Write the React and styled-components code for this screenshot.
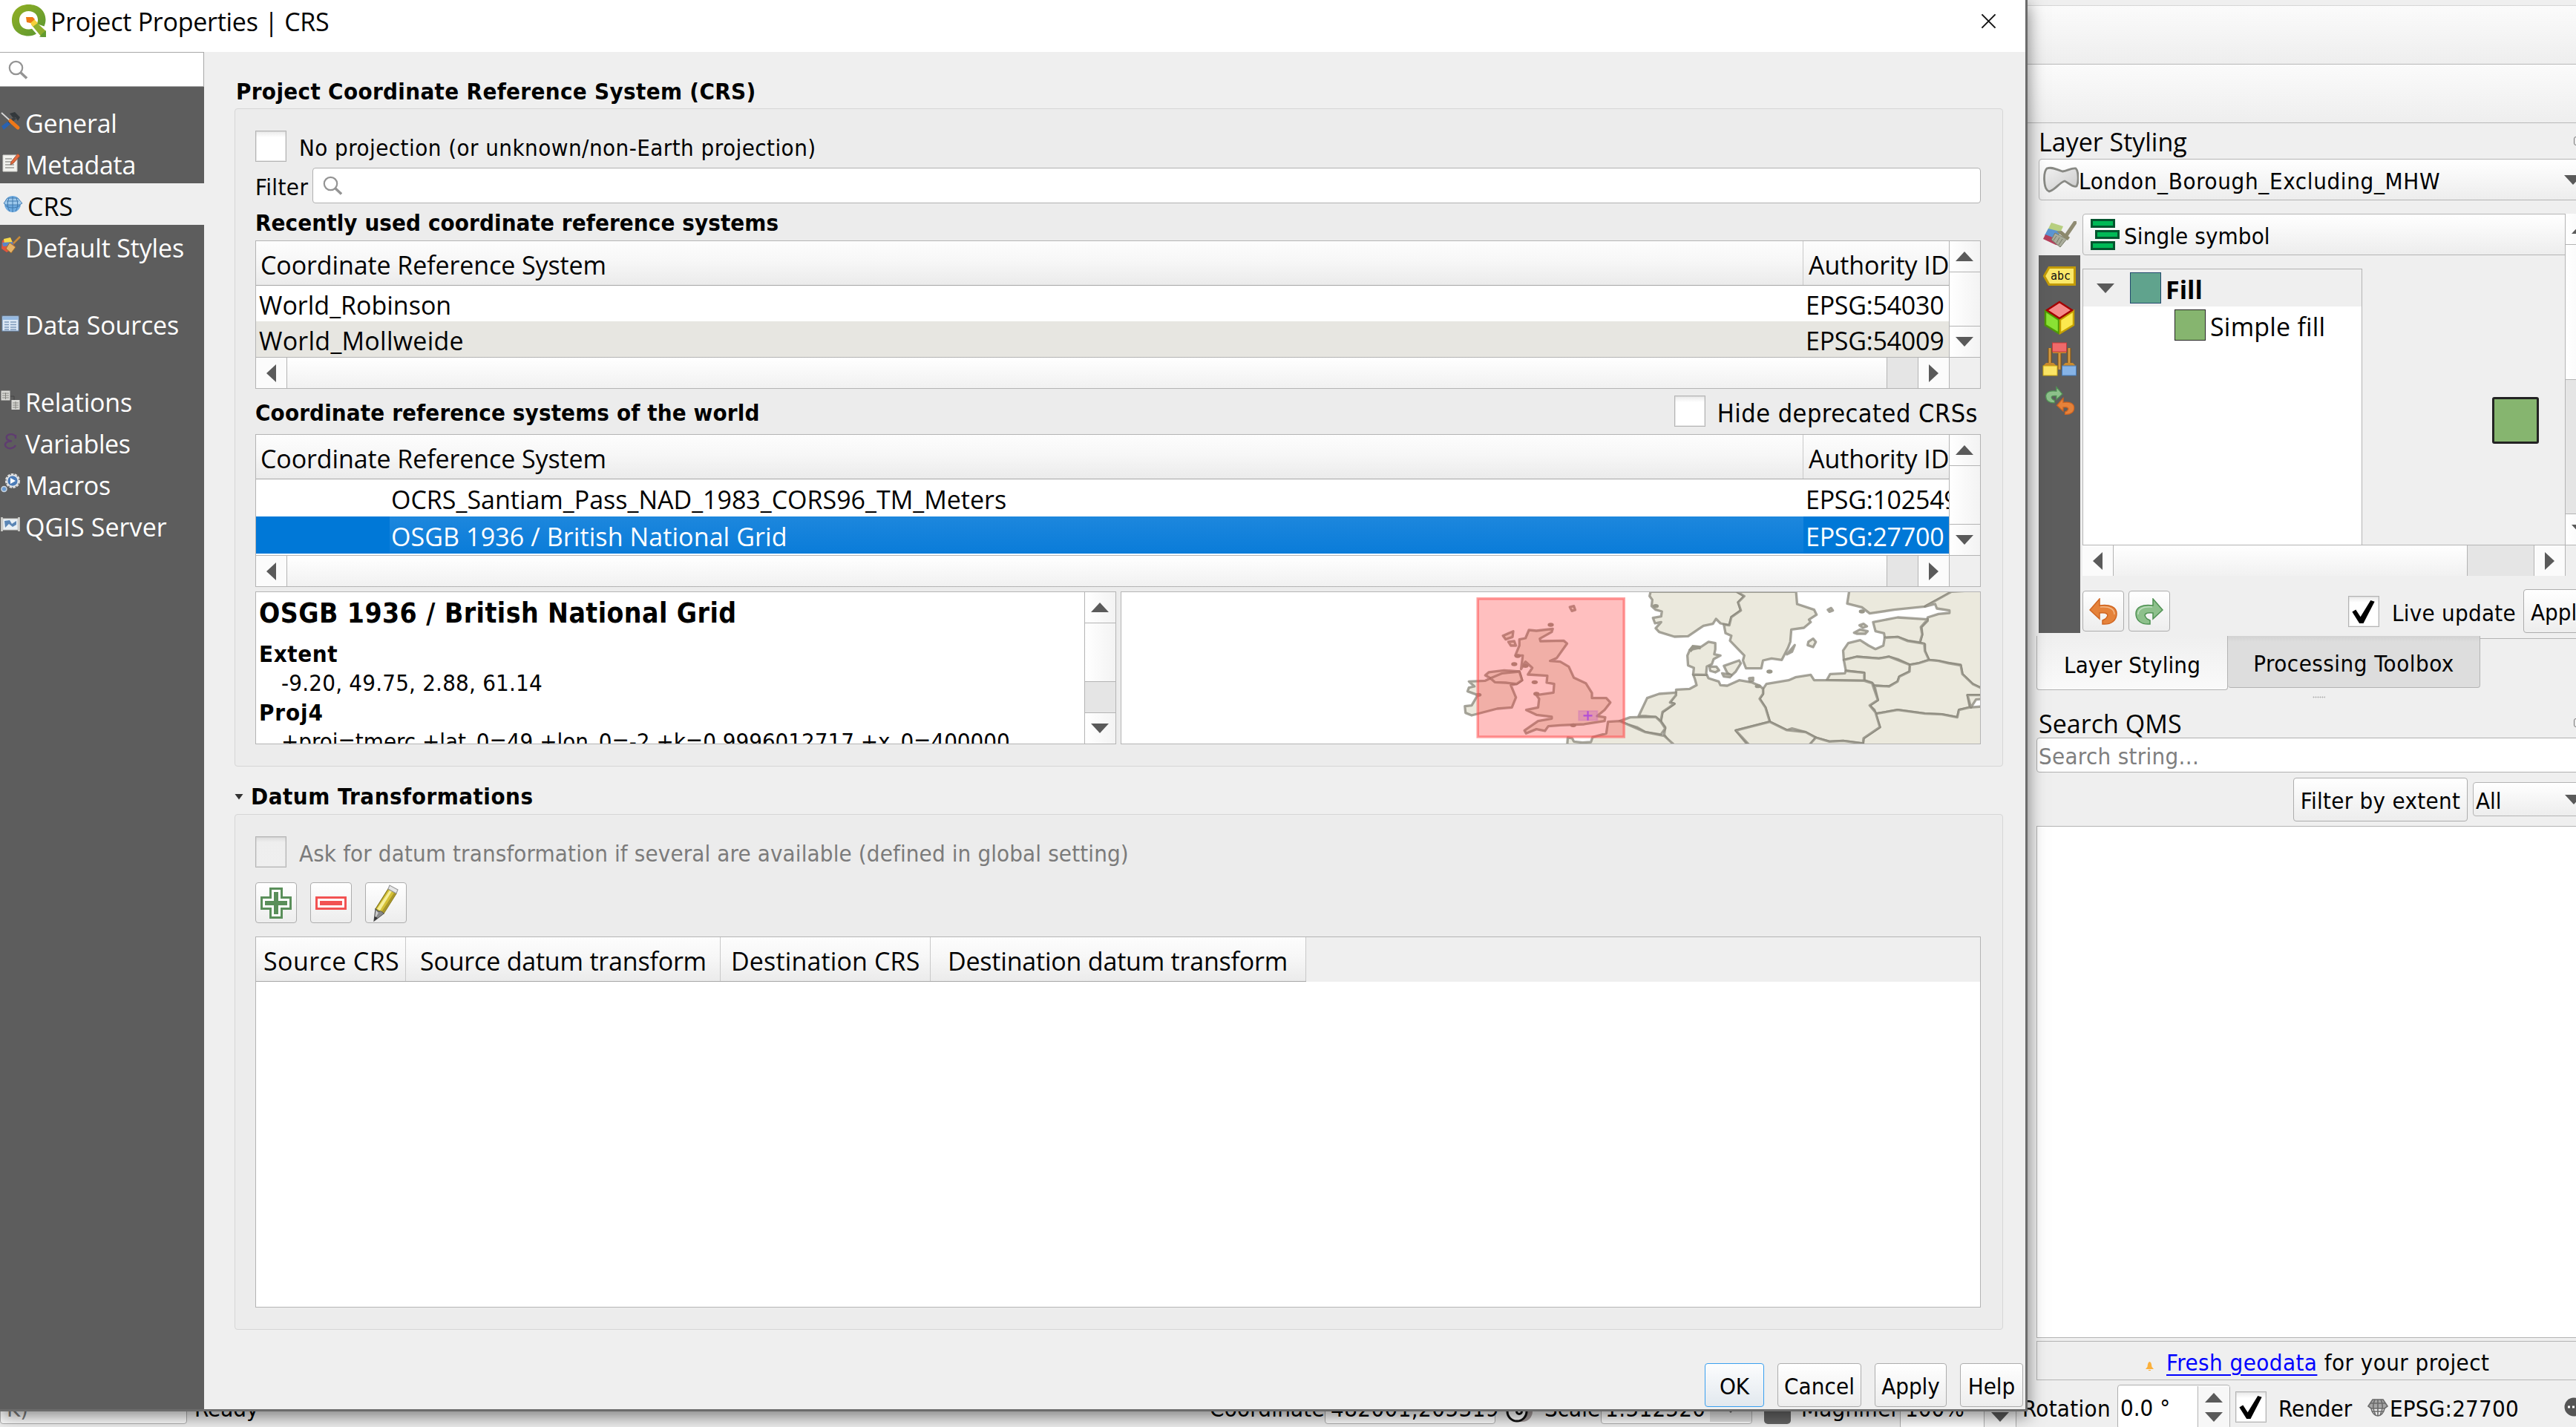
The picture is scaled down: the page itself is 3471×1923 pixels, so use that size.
import React from "react";
import styled, { createGlobalStyle, css } from "styled-components";

const GlobalStyle = createGlobalStyle`
  * { box-sizing: border-box; }
  body { margin: 0; background: #efefef; overflow: hidden; }
`;

const listFont = `"Open Sans", "Noto Sans", sans-serif`;
const formFont = `"DejaVu Sans Condensed", "DejaVu Sans", sans-serif`;
const line = "#b4b4b4";
const dark = "#5d5d5d";
const raised = "linear-gradient(#ffffff, #ededed)";

/* ---------- text ---------- */

const ListText = styled.span`
  display: block;
  font-family: ${listFont};
  font-size: 34px;
  font-weight: ${(p) => (p.$bold ? 700 : 400)};
  letter-spacing: ${(p) => p.$track || 0}px;
  padding-top: ${(p) => (p.$drop || 0) + 2}px;
  color: ${(p) => p.$color || "#000"};
  line-height: 1.2;
  white-space: pre;
`;

const FormText = styled.span`
  display: block;
  flex: none;
  font-family: ${formFont};
  font-size: ${(p) => p.$size || 31}px;
  font-weight: ${(p) => (p.$bold ? 700 : 400)};
  letter-spacing: ${(p) => p.$track || 0}px;
  padding-top: ${(p) => (p.$drop || 0) + 2}px;
  width: ${(p) => (p.$width ? `${p.$width}px` : "auto")};
  color: ${(p) => p.$color || "#000"};
  line-height: 1.2;
  white-space: pre;
`;

/* ---------- shared controls ---------- */

const triangle = {
  up: css`border-width: 0 12px 13px 12px; border-bottom-color: #5a5a5a;`,
  down: css`border-width: 13px 12px 0 12px; border-top-color: #5a5a5a;`,
  left: css`border-width: 12px 13px 12px 0; border-right-color: #5a5a5a;`,
  right: css`border-width: 12px 0 12px 13px; border-left-color: #5a5a5a;`,
};

const Arrow = styled.i`
  display: block;
  flex: none;
  width: 0;
  height: 0;
  border: 0 solid transparent;
  ${(p) => triangle[p.$dir]}
`;

const CheckBox = styled.span`
  flex: none;
  width: 42px;
  height: 42px;
  border: 1px solid ${line};
  outline: 1px solid rgba(180, 180, 180, 0.3);
  outline-offset: -2px;
  background: ${(p) =>
    p.$disabled
      ? "linear-gradient(#dcdcdc, #eeeeee 7px, #efefef)"
      : "linear-gradient(#e9e9e9, #ffffff 8px)"};
`;

const Button = styled.button`
  display: flex;
  flex: none;
  align-items: center;
  justify-content: ${(p) => (p.$start ? "flex-start" : "center")};
  width: ${(p) => p.$w}px;
  height: ${(p) => p.$h}px;
  padding: 0 0 0 ${(p) => (p.$start ? 9 : 0)}px;
  border: 1.5px solid ${(p) => (p.$primary ? "#3aa0f0" : "#adadad")};
  border-radius: 4px;
  background: ${(p) =>
    p.$primary ? "linear-gradient(#fcfdfe, #e2e8ee)" : raised};
`;

const Combo = styled.div`
  display: flex;
  align-items: center;
  flex: none;
  width: ${(p) => p.$w}px;
  height: ${(p) => p.$h}px;
  margin-left: ${(p) => p.$ml || 0}px;
  padding-left: ${(p) => p.$pad}px;
  border: 1.5px solid ${line};
  border-radius: 4px;
  background: ${raised};
`;

const Push = styled.span`
  margin-left: auto;
  padding-right: ${(p) => p.$pr || 0}px;
`;

const Field = styled.div`
  display: flex;
  align-items: center;
  flex: none;
  width: ${(p) => (p.$w ? `${p.$w}px` : "auto")};
  flex-grow: ${(p) => (p.$w ? 0 : 1)};
  height: ${(p) => p.$h}px;
  margin-left: ${(p) => p.$ml || 0}px;
  padding-left: ${(p) => p.$pad || 0}px;
  border: 1.5px solid #b0b0b0;
  border-radius: 4px;
  background: #fff;
`;

/* ---------- scroll bars ---------- */

const VBar = styled.div`
  display: flex;
  flex-direction: column;
  width: ${(p) => p.$w || 42}px;
  flex: none;
  border-left: 1px solid ${line};
  background: linear-gradient(90deg, #ffffff, #f3f3f3);
`;

const VEnd = styled.div`
  display: flex;
  align-items: center;
  justify-content: center;
  flex: none;
  height: 42px;
  padding-right: 2px;
  background: linear-gradient(90deg, #ffffff, #f3f3f3);
  border-top: ${(p) => (p.$last ? `1px solid ${line}` : "none")};
  border-bottom: ${(p) => (p.$last ? "none" : `1px solid ${line}`)};
`;

const Track = styled.div`
  flex: ${(p) => (p.$len ? `0 0 ${p.$len}px` : "1")};
`;

const VThumb = styled.div`
  flex: ${(p) => (p.$len ? `0 0 ${p.$len}px` : "1")};
  border-top: 1px solid ${line};
  background: #e5e5e5;
`;

const HBar = styled.div`
  display: flex;
  flex: none;
  height: 42px;
  border-top: 1px solid ${line};
  background: linear-gradient(#ffffff, #f1f1f1);
`;

const HEnd = styled.div`
  display: flex;
  align-items: center;
  justify-content: center;
  flex: none;
  width: 42px;
  background: #fbfbfb;
  border-right: 1px solid ${line};
`;

const HThumb = styled.div`
  flex: none;
  width: ${(p) => p.$len}px;
  border-left: 1px solid ${line};
  border-right: 1px solid ${line};
  background: #e5e5e5;
`;

const Corner = styled.div`
  flex: none;
  width: 41px;
  background: #efefef;
`;

/* ---------- dialog ---------- */

const Screen = styled.div`
  position: relative;
  width: 3471px;
  height: 1923px;
  overflow: hidden;
  background: #efefef;
`;

const Dialog = styled.section`
  position: absolute;
  left: 0;
  top: 0;
  display: flex;
  flex-direction: column;
  width: 2732px;
  height: 1902px;
  border-right: 3px solid #6b6b6b;
  border-bottom: 3px solid #6b6b6b;
  background: #efefef;
  box-shadow: 0 6px 22px rgba(0, 0, 0, 0.5);
`;

const TitleBar = styled.header`
  display: flex;
  align-items: center;
  flex: none;
  height: 70px;
  padding: 0 39px 14px 14px;
  background: #fff;
`;

const TitleText = styled.div`
  flex: 1;
  padding: 1px 0 0 4px;
`;

const DialogBody = styled.div`
  display: flex;
  flex: 1;
  min-height: 0;
`;

const Sidebar = styled.nav`
  flex: none;
  width: 275px;
  background: ${dark};
`;

const SideSearch = styled.div`
  display: flex;
  align-items: center;
  height: 47px;
  margin-bottom: 18px;
  padding-left: 11px;
  border: 1px solid #a8a8a8;
  border-left: 0;
  background: #fff;
`;

const SideItem = styled.div`
  display: flex;
  align-items: center;
  height: 56px;
  margin-top: ${(p) => (p.$gap ? 48 : 0)}px;
  padding-left: ${(p) => (p.$active ? 4 : 1)}px;
  background: ${(p) => (p.$active ? "#efefef" : "transparent")};
  svg { flex: none; margin-right: 6px; }
`;

const Main = styled.main`
  display: flex;
  flex-direction: column;
  flex: 1;
  min-width: 0;
  padding-left: 41px;
`;

const Heading = styled.div`
  display: flex;
  align-items: center;
  flex: none;
  height: ${(p) => p.$h}px;
  padding-left: ${(p) => p.$pad || 0}px;
  gap: 10px;
`;

const FoldArrow = styled.svg`
  margin-top: 17px;
`;

const Group = styled.div`
  display: flex;
  flex-direction: column;
  flex: none;
  width: 2383px;
  height: ${(p) => p.$h}px;
  padding: 29px 29px 0 27px;
  border: 1px solid #d6d6d6;
  border-radius: 4px;
  background: #ececec;
`;

const Row = styled.div`
  display: flex;
  align-items: center;
  flex: none;
  height: ${(p) => p.$h}px;
  margin-top: ${(p) => p.$mt || 0}px;
  gap: ${(p) => p.$gap || 0}px;
`;

const Spread = styled(Row)`
  justify-content: space-between;
`;

const HideOption = styled.div`
  display: flex;
  align-items: center;
  gap: 16px;
  padding-right: 4px;
`;

const Frame = styled.div`
  display: flex;
  flex: none;
  flex-direction: ${(p) => (p.$row ? "row" : "column")};
  width: ${(p) => (p.$w ? `${p.$w}px` : "auto")};
  height: ${(p) => p.$h}px;
  margin-top: ${(p) => p.$mt || 0}px;
  overflow: hidden;
  border: 1px solid ${line};
  background: #fff;
`;

const TableTop = styled.div`
  display: flex;
  flex: 1;
  min-height: 0;
`;

const TableCells = styled.div`
  flex: 1;
  min-width: 0;
  overflow: hidden;
`;

const HeadRow = styled.div`
  display: flex;
  height: 60px;
  border-bottom: 1.5px solid #a6a6a6;
  background: linear-gradient(#fdfdfd 0%, #f7f7f7 45%, #ebebeb 100%);
`;

const HeadCell = styled.div`
  display: flex;
  align-items: center;
  flex: none;
  width: ${(p) => p.$w}px;
  padding-left: ${(p) => p.$pad}px;
  border-right: ${(p) => (p.$last ? "none" : "1px solid #c9c9c9")};
`;

const CrsRow = styled.div`
  display: flex;
  height: ${(p) => p.$h}px;
  background: ${(p) =>
    p.$selected ? "#0078d7" : p.$alt ? "#e7e6e1" : "#fff"};
`;

const NameCell = styled.div`
  display: flex;
  align-items: center;
  flex: none;
  width: ${(p) => 2085 - (p.$indent || 0)}px;
  margin-left: ${(p) => p.$indent || 0}px;
  padding-left: ${(p) => (p.$indent ? 2 : 4)}px;
  background: ${(p) =>
    p.$selected ? "linear-gradient(#1d87dd, #0a7cd9)" : "transparent"};
`;

const IdCell = styled.div`
  display: flex;
  align-items: center;
  padding-left: 3px;
`;

const InfoText = styled.div`
  flex: 1;
  min-width: 0;
  overflow: hidden;
  padding-left: 4px;
`;

const InfoTitle = styled.div`
  display: flex;
  align-items: center;
  height: 56px;
  margin-bottom: 7px;
`;

const InfoLine = styled.div`
  display: flex;
  align-items: center;
  height: 39.3px;
  padding-left: ${(p) => (p.$indent ? 30 : 0)}px;
`;

const Map = styled.div`
  flex: none;
  width: 1159px;
  height: 206px;
  border: 1px solid ${line};
  background: #fff;
  svg { display: block; }
`;

const DatumHead = styled.div`
  display: flex;
  height: 60px;
  background: #efefef;
`;

const DatumCells = styled.div`
  display: flex;
  width: 1415px;
  border-bottom: 1.5px solid #a6a6a6;
  background: linear-gradient(#fdfdfd 0%, #f7f7f7 45%, #ebebeb 100%);
`;

const ButtonBar = styled.footer`
  display: flex;
  justify-content: flex-end;
  gap: 18px;
  margin-top: 45px;
  padding-right: 3px;
`;

/* ---------- main window behind ---------- */

const AppWindow = styled.div`
  display: flex;
  flex-direction: column;
  height: 1923px;
`;

const ToolStrip = styled.div`
  flex: none;
  height: ${(p) => p.$h}px;
  border-bottom: 1.5px solid ${(p) => (p.$faint ? "#d6d6d6" : "#b8b8b8")};
  background: ${(p) => (p.$faint ? "#efefef" : "linear-gradient(#fbfbfb, #eeeeee)")};
`;

const Dock = styled.aside`
  display: flex;
  flex-direction: column;
  flex: none;
  width: 739px;
  height: 1695px;
  margin-left: 2732px;
  overflow: hidden;
`;

const DockTitle = styled.div`
  display: flex;
  align-items: center;
  justify-content: space-between;
  flex: none;
  height: ${(p) => p.$h}px;
  padding-left: 15px;
`;

const FloatMark = styled.i`
  width: 12px;
  height: 12px;
  margin-right: -9px;
  border: 1.5px solid #777;
  border-radius: 3px;
`;

const Styling = styled.div`
  display: flex;
  flex: none;
  height: 565px;
  margin: 18px 0 0 15px;
`;

const StyleTabs = styled.div`
  display: flex;
  flex-direction: column;
  align-items: center;
  flex: none;
  width: 56px;
  margin-right: 3px;
  background: linear-gradient(#efefef 56px, ${dark} 56px);
  svg { flex: none; display: block; }
`;

const TabSlot = styled.div`
  display: flex;
  align-items: center;
  justify-content: center;
  height: ${(p) => p.$h}px;
`;

const StylePane = styled.div`
  display: flex;
  flex-direction: column;
  flex: none;
  width: 700px;
`;

const PaneTop = styled.div`
  display: flex;
  height: 446px;
`;

const PaneInner = styled.div`
  width: 650px;
  flex: none;
`;

const TreeRow = styled.div`
  display: flex;
  height: 372px;
  margin-top: 18px;
`;

const Tree = styled.div`
  width: 377px;
  border: 1px solid ${line};
  border-bottom: 0;
  background: #fff;
`;

const TreeItem = styled.div`
  display: flex;
  align-items: center;
  height: 50px;
  padding-left: ${(p) => p.$pad}px;
  background: ${(p) => (p.$active ? "#efefef" : "#fff")};
`;

const Swatch = styled.span`
  flex: none;
  width: 42px;
  height: 42px;
  margin: 0 6px 0 ${(p) => p.$ml || 0}px;
  border: 1.5px solid ${(p) => p.$edge};
  background: ${(p) => p.$fill};
`;

const Preview = styled.div`
  width: 63px;
  height: 63px;
  margin: 173px 0 0 175px;
  border: 3px solid #232323;
  border-radius: 3px;
  background: #86b56f;
`;

const StyleFoot = styled.div`
  display: flex;
  align-items: center;
  height: 59px;
  margin-top: 18px;
`;

const LiveUpdate = styled.div`
  display: flex;
  align-items: center;
  gap: 17px;
  width: 236px;
  margin-left: 240px;
`;

const Tabs = styled.div`
  display: flex;
  flex: none;
  height: 73px;
  margin: 4px 0 0 12px;
`;

const Tab = styled.div`
  display: flex;
  align-items: center;
  justify-content: center;
  width: ${(p) => p.$w}px;
  height: ${(p) => (p.$active ? 73 : 70)}px;
  border: 1.5px solid ${line};
  border-top: 0;
  border-left-width: ${(p) => (p.$active ? 1.5 : 0)}px;
  border-radius: 0 0 4px 4px;
  background: ${(p) =>
    p.$active ? "linear-gradient(#efefef, #fafafa)" : "linear-gradient(#d2d2d2, #dddddd 8px)"};
`;

const TabLine = styled.div`
  flex: 1;
  margin-top: 3px;
  border-top: 1.5px solid ${line};
`;

const Grip = styled.div`
  flex: none;
  width: 17px;
  height: 24px;
  margin-left: 384px;
  background: radial-gradient(circle, #b0b0b0 0.8px, transparent 1.2px) 0 8px / 3px 3px repeat-x;
`;

const SearchTools = styled.div`
  display: flex;
  align-items: center;
  flex: none;
  height: 72px;
  padding-left: 358px;
`;

const Results = styled.div`
  flex: none;
  width: 760px;
  height: 690px;
  margin-left: 12px;
  border: 1px solid ${line};
  background: #fff;
`;

const News = styled.div`
  display: flex;
  align-items: center;
  flex: none;
  width: 760px;
  height: 53px;
  margin: 4px 0 0 12px;
  padding-left: 146px;
  border: 1.5px solid ${line};
  svg { margin: 14px 17px 0 0; }
`;

const Link = styled.a`
  color: #0000ff;
  text-decoration: underline;
  text-decoration-thickness: 2px;
  text-underline-offset: 5px;
`;

const StatusBar = styled.footer`
  display: flex;
  align-items: center;
  flex: none;
  height: 70px;
  svg { flex: none; display: block; }
`;

const Spin = styled(Field)`
  height: 60px;
`;

const SpinArrows = styled.div`
  display: flex;
  flex-direction: column;
  align-items: center;
  justify-content: space-between;
  width: 43px;
  height: 57px;
  margin-left: auto;
  padding: 9px 0 9px;
  border-left: 1px solid ${line};
  background: #f7f7f7;
`;

const ScaleDrop = styled.span`
  display: flex;
  justify-content: center;
  width: 56px;
  height: 40px;
  margin-left: auto;
  padding-top: 15px;
  background: #e4e4e4;
`;

const Gap = styled.span`
  flex: none;
  width: ${(p) => p.$w}px;
`;

const Lock = styled.span`
  flex: none;
  width: 36px;
  height: 38px;
  margin: 8px 14px 0 16px;
  border-radius: 5px;
  background: #666;
`;

/* ---------- icons ---------- */

const Magnifier = () => (
  <svg width="26" height="26" viewBox="0 0 26 26" fill="none" stroke="#949494">
    <circle cx="10.5" cy="10.5" r="8.7" strokeWidth="2.2" />
    <path d="M16.5 16.5L25 24.5" strokeWidth="3.4" />
  </svg>
);

const QgisLogo = () => (
  <svg width="50" height="46" viewBox="0 0 50 46">
    <defs>
      <linearGradient id="ring" x1="0" y1="0" x2="1" y2="1">
        <stop offset="0" stopColor="#93b023" />
        <stop offset="1" stopColor="#589632" />
      </linearGradient>
    </defs>
    <path fillRule="evenodd" fill="url(#ring)" d="M24.5 1C38 1 47.5 9.500 47.5 21.500C47.500 25 46.500 28 45.500 30.500L35.500 27C36.500 25.500 37 23.800 37 21.800C37 15 32 10 24.500 10C17 10 12 15 12 22C12 29.500 17 34.500 24 34.500C26 34.500 27.500 34.300 29 33.800L35 40.500C32 42.500 28.500 43.500 24.500 43.500C11 43.500 2 34.500 2 22.500C2 10 11 1 24.500 1Z" />
    <path fill="#8fae2c" d="M28 28L36 26L48 37V45H42Z" />
    <path fill="#589632" d="M39 45H48V36L43 40Z" opacity="0.800" />
    <path fill="#f5d03c" d="M26 24L31 20L37 26L30 31Z" />
    <path fill="#ee7913" d="M21 18H30L33 21L27 26L22 25Z" />
  </svg>
);

const CloseIcon = () => (
  <svg width="21" height="21" viewBox="0 0 22 22" stroke="#111" strokeWidth="2">
    <path d="M1.500 1.500L20.500 20.500M20.500 1.500L1.500 20.500" />
  </svg>
);

const sideArt = {
  general: (
    <>
      <path d="M12 3L19 1L26 8L23 13L20 8L16 8Z" fill="#33383b" />
      <path d="M18 7L21 10L8 20L6 18Z" fill="#3a3f42" />
      <path d="M9 14L1 20L4 25L13 17Z" fill="#2a62b0" />
      <path d="M1 2L12 12" stroke="#d8d8d8" strokeWidth="1.800" />
      <path d="M13 13L23 22" stroke="#f07818" strokeWidth="5" strokeLinecap="round" />
    </>
  ),
  metadata: (
    <>
      <path d="M3 3H22V25H3Z" fill="#f2f2ee" stroke="#cfcfcb" />
      <path d="M6 8H15M6 12H14M6 16H18M6 20H18" stroke="#9a9a96" strokeWidth="1.500" />
      <path d="M23 1L26 4L17 14L13 16L14 12Z" fill="#e2683c" stroke="#8e4a30" strokeWidth="0.800" />
    </>
  ),
  crs: (
    <>
      <circle cx="13" cy="13" r="11" fill="#6fabe0" />
      <path d="M1 12L6 5H20L26 12L22 14H4Z" fill="#9ec9ec" stroke="#3f78ad" strokeWidth="0.900" />
      <path d="M3 15C9 19 17 19 23 15M13 3V24M8 5Q4 14 9 23M18 5Q22 14 17 23M5 9H21" stroke="#3f78ad" fill="none" strokeWidth="1" />
    </>
  ),
  styles: (
    <>
      <path d="M2 6L13 2L19 15L8 22L1 17Z" fill="#e2553c" />
      <path d="M4 4L13 2L16 9L5 11Z" fill="#f4d94c" />
      <path d="M2 9L16 8L17 13L3 14Z" fill="#5b86c9" />
      <path d="M26 1L17 10" stroke="#c98a3a" strokeWidth="2.500" />
      <path d="M12 9L20 15L14 23L7 17Z" fill="#e6b368" stroke="#a06d2c" />
    </>
  ),
  sources: (
    <>
      <rect x="2" y="4" width="22" height="20" fill="#dce8f5" stroke="#6c8fb8" />
      <rect x="3" y="5" width="20" height="4" fill="#94b9e2" />
      <path d="M5 12H11M13 12H21M5 15.500H11M13 15.500H21M5 19H11M13 19H21M5 22H11M13 22H21" stroke="#7d99ba" strokeWidth="1.400" />
    </>
  ),
  relations: (
    <>
      <path d="M13 8H18V14" fill="none" stroke="#444" />
      <rect x="0.500" y="0.500" width="12" height="13" fill="#d8d8d4" />
      <rect x="14.500" y="13" width="11" height="13" fill="#d8d8d4" />
      <path d="M2 4H11M2 7H11M2 10H11M6.500 3V12M16 17H24M16 20H24M16 23H24M20 15V25" stroke="#858580" />
    </>
  ),
  variables: (
    <path d="M20 6C16 1 6 3 8 9C9 12 13 12 15 12.500C8 12 4 16 7 20C11 24 18 22 20 18M20 4V9" fill="none" stroke="#5f3d70" strokeWidth="2.400" />
  ),
  macros: (
    <>
      <circle cx="16" cy="10" r="8.500" fill="#4c7cb8" stroke="#dadada" strokeWidth="3.200" strokeDasharray="3.500 1.200" />
      <circle cx="16" cy="10" r="7.500" fill="none" stroke="#e6e6e6" strokeWidth="1.500" />
      <path d="M13 6L20 10L13 14Z" fill="#fff" />
      <circle cx="4.500" cy="21" r="3.500" fill="#6b9bd0" stroke="#c8d4e0" strokeWidth="1.500" />
    </>
  ),
  server: (
    <>
      <rect x="3" y="5" width="20" height="15" fill="#e9f0f5" stroke="#d0d0cc" />
      <path d="M5 8L12 7L15 12L21 8V13L16 16L11 12L6 17Z" fill="#5b86b5" />
      <path d="M1.500 3V22M24.500 3V22" stroke="#d8d8d4" strokeWidth="2.500" />
    </>
  ),
};

const SideIcon = ({ name }) => (
  <svg width="27" height="27" viewBox="0 0 27 27">{sideArt[name]}</svg>
);

const PlusIcon = () => (
  <svg width="42" height="42" viewBox="0 0 42 42">
    <path d="M12 0H30V12H42V30H30V42H12V30H0V12H12Z" fill="#5a8f5a" />
    <path d="M15 3H27V15H39V27H27V39H15V27H3V15H15Z" fill="#fff" />
    <path d="M18 6H24V18H36V24H24V36H18V24H6V18H18Z" fill="#5a8f5a" />
  </svg>
);

const MinusIcon = () => (
  <svg width="42" height="18" viewBox="0 0 42 18">
    <rect width="42" height="18" fill="#f25252" />
    <rect x="3" y="3" width="36" height="12" fill="#fff" />
    <rect x="6" y="6" width="30" height="6" fill="#f25252" />
  </svg>
);

const PencilIcon = () => (
  <svg width="34" height="50" viewBox="0 0 34 50">
    <path d="M20 6L31 12L14 39L3 33Z" fill="#d4c036" stroke="#80741c" strokeWidth="1.200" />
    <path d="M22 8L25 9L9 35L5 33Z" fill="#f5ee9a" />
    <path d="M28 11L31 12L14 39L11 37Z" fill="#a8962a" />
    <path d="M20 6L22 1L33 7L31 12Z" fill="#e6e6e6" stroke="#999" strokeWidth="1.200" />
    <path d="M3 33L1 49L14 39L10 36L7 37Z" fill="#c9c9c9" stroke="#555" strokeWidth="1.200" />
    <path d="M7 38L2 47L13 39L10 36Z" fill="#888" />
    <path d="M1 49L2 43L6 45Z" fill="#333" />
  </svg>
);

const PolygonIcon = () => (
  <svg width="48" height="36" viewBox="0 0 48 36">
    <defs>
      <linearGradient id="poly" x1="0" y1="0" x2="1" y2="1">
        <stop offset="0" stopColor="#f2f2f2" />
        <stop offset="1" stopColor="#c9c9c9" />
      </linearGradient>
    </defs>
    <path d="M5 3C12 0 19 5 26 7C33 6 38 2 44 3C48 7 48 22 45 27C39 29 34 22 29 20C22 22 15 33 8 34C0 31 0 8 5 3Z" fill="url(#poly)" stroke="#888984" strokeWidth="2.800" />
  </svg>
);

const BrushIcon = () => (
  <svg width="46" height="36" viewBox="0 0 46 36">
    <path d="M12 2L28 7L22 20L5 16Z" fill="#b7cf80" />
    <path d="M8 10L24 14L20 24L3 19Z" fill="#5b95d2" />
    <path d="M4 18L14 22L24 33L18 32L1 24Z" fill="#b5405c" />
    <path d="M44 2L33 18" stroke="#8f8b72" strokeWidth="5" strokeLinecap="round" />
    <path d="M17 16L33 24L24 35L12 25Z" fill="#a9ac9b" stroke="#777a68" />
    <path d="M19 14L26 13L37 22L34 26Z" fill="#8c886c" />
    <path d="M19 20L15 26M23 22L19 29M27 24L22 32" stroke="#777a68" />
  </svg>
);

const LabelIcon = () => (
  <svg width="44" height="26" viewBox="0 0 44 26">
    <path d="M8 1.500H42.500V24.500H8L1.500 13Z" fill="#fbe96a" stroke="#c39b08" strokeWidth="3" />
    <text x="10" y="18" fontFamily="DejaVu Sans Mono, monospace" fontSize="15" fill="#111">abc</text>
  </svg>
);

const CubeIcon = () => (
  <svg width="42" height="46" viewBox="0 0 42 46">
    <path d="M2 14L20 26V44L2 33Z" fill="#8ae234" stroke="#4e9a06" strokeWidth="2.400" />
    <path d="M40 14L22 26V44L40 33Z" fill="#fce94f" stroke="#c4a000" strokeWidth="2.400" />
    <path d="M21 2L38 13L21 24L4 13Z" fill="#f58a8a" stroke="#a40000" strokeWidth="2.400" />
  </svg>
);

const BrushesIcon = () => (
  <svg width="46" height="46" viewBox="0 0 46 46">
    <path d="M10 8V30M36 8V30M23 14V37" stroke="#7d4f11" strokeWidth="5" />
    <path d="M10 8V30M36 8V30M23 14V37" stroke="#d39a42" strokeWidth="3" />
    <path d="M14 10H32V15H14ZM1 32L5 28H15L19 32ZM27 32L31 28H41L45 32Z" fill="#c98a2d" />
    <rect x="13.500" y="1" width="19" height="12" fill="#f06a6a" stroke="#c73b3b" />
    <rect x="1" y="32" width="19" height="13" fill="#fbe566" stroke="#cba80e" />
    <rect x="26.500" y="32" width="19" height="13" fill="#86b3e6" stroke="#4478b5" />
  </svg>
);

const UndoIcon = ({ width, height }) => (
  <svg width={width} height={height} viewBox="0 0 38 36">
    <path d="M14 1L1 16L14 28V20C24 19 28 22 22 28L18 30V35C30 36 37 30 37 21C37 12 28 8 14 10Z" fill="#e5823a" stroke="#cf6420" strokeWidth="1.500" />
    <path d="M15 12C28 11 34 15 34 22" stroke="#f2b98a" strokeWidth="1.500" fill="none" />
  </svg>
);

const RedoIcon = ({ width, height }) => (
  <svg width={width} height={height} viewBox="0 0 38 36">
    <path d="M24 1L37 16L24 28V20C14 19 10 22 16 28L20 30V35C8 36 1 30 1 21C1 12 10 8 24 10Z" fill="#8dc08b" stroke="#4f9153" strokeWidth="1.500" />
    <path d="M23 12C10 11 4 15 4 22" stroke="#c0dfc0" strokeWidth="1.500" fill="none" />
  </svg>
);

const HistoryIcon = () => (
  <svg width="42" height="42" viewBox="0 0 42 42">
    <g transform="translate(2 2) scale(0.620)">
      <path d="M24 1L37 16L24 28V20C14 19 10 22 16 28L20 30V35C8 36 1 30 1 21C1 12 10 8 24 10Z" fill="#8dc08b" stroke="#4f9153" strokeWidth="2" />
    </g>
    <g transform="translate(17 17) scale(0.640)">
      <path d="M14 1L1 16L14 28V20C24 19 28 22 22 28L18 30V35C30 36 37 30 37 21C37 12 28 8 14 10Z" fill="#e5823a" stroke="#cf6420" strokeWidth="2" />
    </g>
  </svg>
);

const SingleSymbolIcon = () => (
  <svg width="39" height="42" viewBox="0 0 39 42" fill="#00b956" stroke="#05552f" strokeWidth="3">
    <rect x="1.500" y="1.500" width="30" height="9" />
    <rect x="7.500" y="16.500" width="30" height="9" />
    <rect x="1.500" y="31.500" width="30" height="9" />
  </svg>
);

const Tick = () => (
  <svg width="40" height="40" viewBox="0 0 41 41">
    <path d="M4.500 21L9.500 18L16 28L30 5L35.500 7L20 37H14.500Z" fill="#000" />
  </svg>
);

const BellIcon = () => (
  <svg width="11" height="12" viewBox="0 0 11 12">
    <path d="M5.500 0C8 1 8 4 8.500 7L11 10H0L2.500 7C3 4 3 1 5.500 0ZM4 11H7V12H4Z" fill="#fbb03b" />
  </svg>
);

const MouseIcon = () => (
  <svg width="66" height="46" viewBox="0 0 66 46">
    <circle cx="36" cy="29" r="14" fill="#a39a9a" />
    <circle cx="29" cy="29" r="13" fill="#fff" stroke="#111" strokeWidth="3" />
    <circle cx="32" cy="29" r="3.500" fill="#fff" stroke="#111" strokeWidth="3" />
    <path d="M5 25H9M13 22H19" stroke="#111" strokeWidth="3" />
  </svg>
);

const GlobeIcon = () => (
  <svg width="28" height="26" viewBox="0 0 28 26" fill="none" stroke="#6a6a6a" strokeWidth="1.600">
    <path d="M1 12L7 3H21L27 12L23 15H5Z" fill="#a5a5a5" />
    <path d="M5 15C6 21 10 25 14 25C18 25 22 21 23 15M14 3V25M10 3Q5 12 11 24M18 3Q23 12 17 24M4 8H24M6 19H22" />
  </svg>
);

const MessageIcon = () => (
  <svg width="26" height="26" viewBox="0 0 26 26">
    <circle cx="13" cy="13" r="12.500" fill="#555" />
    <path d="M5 13H8M11 13H14M17 13H20" stroke="#fff" strokeWidth="3" />
  </svg>
);

/* ---------- extent map ---------- */

const countries = [
  "575,22 572,40 580,55 578,80 590,95 608,102 606,122 582,128 588,150 606,145 590,170 600,185 645,204 685,202 730,160 758,152 767,132 780,150 806,158 812,125 840,98 832,65 850,40 828,22",
  "828,22 850,40 832,65 840,98 812,125 806,158 790,155 795,190 812,200 808,220 850,280 846,300 855,332 900,332 905,300 930,292 960,298 978,250 985,225 988,175 1025,168 1045,145 1040,135 1062,115 1055,95 1005,72 1002,22",
  "1158,18 1152,70 1195,85 1218,110 1290,95 1380,82 1458,25 1460,18",
  "1458,22 1380,82 1410,72 1415,90 1452,98 1452,108 1420,112 1388,126 1388,140 1370,165 1372,195 1365,228 1380,235 1380,262 1392,298 1420,302 1450,310 1485,318 1490,355 1520,395 1550,415 1550,15",
  "1228,145 1300,126 1388,134 1368,165 1372,195 1365,228 1330,220 1300,205 1262,208 1260,190 1235,182",
  "1262,208 1300,205 1330,222 1378,232 1380,262 1392,298 1360,312 1336,318 1300,295 1275,285 1245,292 1180,285 1142,298 1140,260 1155,230 1190,218 1215,240 1235,254 1258,240",
  "1142,298 1180,285 1245,292 1275,285 1336,318 1335,345 1305,365 1300,385 1275,405 1232,402 1225,390 1202,380 1202,350 1148,342",
  "1148,342 1202,350 1202,382 1092,380 1102,355 1145,352",
  "1232,402 1275,405 1300,385 1305,365 1335,345 1336,318 1360,312 1392,298 1420,302 1450,312 1485,320 1490,355 1520,395 1550,415 1550,440 1505,440 1512,490 1480,500 1475,530 1430,518 1380,515 1300,500 1235,516 1232,500 1218,482 1242,460",
  "1235,516 1300,500 1380,515 1430,518 1475,530 1480,500 1510,490 1550,486 1550,650 1198,650 1200,615 1248,570",
  "1505,440 1550,440 1550,455 1530,458 1515,490",
  "905,415 915,395 980,380 1000,368 1045,358 1055,380 1092,380 1202,382 1225,392 1242,460 1218,482 1235,510 1248,570 1200,615 1198,636 1140,625 1100,628 1060,612 1030,590 990,575 975,582 925,548 912,490 895,455 905,435",
  "700,357 740,358 745,372 775,385 780,400 800,402 835,380 870,388 895,402 905,415 905,435 895,455 912,490 925,548 825,583 865,650 640,650 615,600 618,570 605,545 610,510 645,475 632,470 650,430 650,418 690,415 710,400 705,375",
  "700,357 702,330 685,320 683,280 690,258 720,248 745,225 765,230 765,255 762,275 780,280 760,295 755,315 740,325 738,358",
  "790,322 835,300 840,312 825,345 812,362 800,350",
  "748,325 768,325 776,340 765,348 750,342",
  "785,352 812,358 808,368 790,365",
  "540,525 565,452 600,435 648,430 650,440 632,470 645,475 610,508 605,545 590,530 560,525",
  "485,545 515,530 590,528 605,548 618,575 605,600 560,590 535,570 510,560",
  "332,612 330,650 650,650 640,636 615,605 560,590 510,560 485,545 450,548 445,595 405,610 400,630 375,632 350,628 345,615",
  "825,583 925,548 975,582 1030,590 1060,612 1040,650 870,650",
  "1060,612 1100,628 1140,625 1198,636 1198,650 1035,650",
  "42,385 90,382 105,372 90,360 100,348 145,340 190,345 198,380 182,395 165,400 180,450 168,490 125,495 50,522 32,512 30,485 50,482 68,440 38,425 42,410 58,405",
  "218,177 240,180 288,172 285,185 250,212 252,222 320,220 330,232 300,290 280,302 310,305 335,325 350,370 385,392 403,432 403,452 445,452 457,470 440,500 418,525 442,530 440,545 380,558 310,562 275,566 265,585 240,578 210,595 205,583 245,545 285,535 285,528 240,520 210,500 245,490 248,455 240,440 290,430 292,395 270,390 272,362 215,357 228,330 208,305 195,335 200,280 178,280 190,240 190,215 208,210",
  "105,372 140,352 190,345 198,380 182,395 150,390 118,388",
  "142,200 172,182 170,205 150,215",
  "158,225 175,222 180,240 165,240",
  "1038,225 1052,212 1060,225 1052,246 1036,238",
  "1172,188 1190,175 1212,182 1205,192 1180,192",
  "1188,158 1200,152 1210,162 1198,168",
  "975,275 998,238 990,265",
  "1095,95 1105,88 1110,98 1100,103",
  "338,84 350,80 354,96 344,100",
  "864,372 876,370 876,382 866,384",
];

const islets = [[282, 156], [235, 388], [240, 435], [348, 562], [175, 315], [208, 322], [590, 80], [924, 345], [1195, 102], [70, 439], [185, 282], [890, 404]];

const ExtentMap = () => (
  <svg width="1157" height="204" viewBox="0 0 1157 204">
    <g transform="translate(449 -8) scale(0.4592 0.3333)">
      {countries.map((points) => (
        <polygon key={points} points={points} fill="#ebe9dd" stroke="#88867a" strokeOpacity="0.75" strokeWidth="3.300" strokeLinejoin="round" vectorEffect="non-scaling-stroke" />
      ))}
      {islets.map(([x, y]) => (
        <ellipse key={`${x}-${y}`} cx={x} cy={y} rx="9" ry="8" fill="#99978a" />
      ))}
      <path d="M690,262 L700,245 722,248" fill="none" stroke="#99978a" strokeWidth="5" vectorEffect="non-scaling-stroke" />
      <rect x="68" y="50" width="429" height="559" fill="#ff2a2a" fillOpacity="0.3" stroke="#ff5050" strokeOpacity="0.55" strokeWidth="3.500" vectorEffect="non-scaling-stroke" />
      <rect x="364" y="504" width="55" height="38" fill="#c060c0" fillOpacity="0.32" stroke="#c060c0" strokeOpacity="0.25" strokeWidth="2" vectorEffect="non-scaling-stroke" />
      <path d="M378 523H404M391 505V542" stroke="#b24fd6" strokeWidth="2.200" vectorEffect="non-scaling-stroke" />
    </g>
  </svg>
);

/* ---------- composed parts ---------- */

const sideItems = [
  { icon: "general", label: "General", track: -0.2 },
  { icon: "metadata", label: "Metadata", track: -0.3 },
  { icon: "crs", label: "CRS", active: true },
  { icon: "styles", label: "Default Styles", track: -0.15 },
  { icon: "sources", label: "Data Sources", track: -0.15, gap: true },
  { icon: "relations", label: "Relations", track: -0.2, gap: true },
  { icon: "variables", label: "Variables", track: -0.4 },
  { icon: "macros", label: "Macros", track: -0.2 },
  { icon: "server", label: "QGIS Server", track: 0.1 },
];

const VScroll = ({ children }) => (
  <VBar>
    <VEnd><Arrow $dir="up" /></VEnd>
    {children || <Track />}
    <VEnd $last><Arrow $dir="down" /></VEnd>
  </VBar>
);

const CrsTable = ({ height, rowHeight, indent, rows }) => (
  <Frame $h={height}>
    <TableTop>
      <TableCells>
        <HeadRow>
          <HeadCell $w={2085} $pad={6}><ListText $drop={3} $track={-0.1}>Coordinate Reference System</ListText></HeadCell>
          <HeadCell $w={240} $pad={7} $last><ListText $drop={3} $track={-0.1}>Authority ID</ListText></HeadCell>
        </HeadRow>
        {rows.map((r) => (
          <CrsRow key={r.id} $h={rowHeight} $alt={r.alt} $selected={r.selected}>
            <NameCell $indent={indent} $selected={r.selected}>
              <ListText $drop={3} $track={r.track} $color={r.selected && "#fff"}>{r.name}</ListText>
            </NameCell>
            <IdCell>
              <ListText $drop={3} $track={-0.25} $color={r.selected && "#fff"}>{r.id}</ListText>
            </IdCell>
          </CrsRow>
        ))}
      </TableCells>
      <VScroll />
    </TableTop>
    <HBar>
      <HEnd><Arrow $dir="left" /></HEnd>
      <Track />
      <HThumb $len={43} />
      <HEnd><Arrow $dir="right" /></HEnd>
      <Corner />
    </HBar>
  </Frame>
);

const datumColumns = [
  { label: "Source CRS", w: 202, pad: 10, track: 0.4 },
  { label: "Source datum transform", w: 424, pad: 19, track: -0.2 },
  { label: "Destination CRS", w: 283, pad: 14, track: 0.15 },
  { label: "Destination datum transform", w: 506, pad: 23, track: -0.2 },
];

const PropertiesDialog = () => (
  <Dialog>
    <TitleBar>
      <QgisLogo />
      <TitleText><ListText $track={-0.26}>Project Properties | CRS</ListText></TitleText>
      <CloseIcon />
    </TitleBar>
    <DialogBody>
      <Sidebar>
        <SideSearch><Magnifier /></SideSearch>
        {sideItems.map((s) => (
          <SideItem key={s.label} $active={s.active} $gap={s.gap}>
            <SideIcon name={s.icon} />
            <ListText $drop={4} $track={s.track} $color={s.active ? "#000" : "#fff"}>{s.label}</ListText>
          </SideItem>
        ))}
      </Sidebar>
      <Main>
        <Heading $h={76} $pad={2}>
          <FormText $bold $drop={30} $track={0.34}>Project Coordinate Reference System (CRS)</FormText>
        </Heading>
        <Group $h={887}>
          <Row $h={42} $gap={17}>
            <CheckBox />
            <FormText $drop={4} $track={0.45}>No projection (or unknown/non-Earth projection)</FormText>
          </Row>
          <Row $h={48} $mt={8}>
            <FormText $drop={3} $track={0.4} $width={77}>Filter</FormText>
            <Field $h={48} $pad={13}><Magnifier /></Field>
          </Row>
          <Row $h={50}>
            <FormText $bold $drop={2} $track={0.1}>Recently used coordinate reference systems</FormText>
          </Row>
          <CrsTable
            height={200}
            rowHeight={48}
            rows={[
              { name: "World_Robinson", id: "EPSG:54030", track: 0 },
              { name: "World_Mollweide", id: "EPSG:54009", track: 0.25, alt: true },
            ]}
          />
          <Spread $h={61}>
            <FormText $bold $drop={3} $track={0.13}>Coordinate reference systems of the world</FormText>
            <HideOption>
              <CheckBox />
              <FormText $size={34} $drop={4} $track={0.5}>Hide deprecated CRSs</FormText>
            </HideOption>
          </Spread>
          <CrsTable
            height={206}
            rowHeight={50}
            indent={180}
            rows={[
              { name: "OCRS_Santiam_Pass_NAD_1983_CORS96_TM_Meters", id: "EPSG:102549", track: 0 },
              { name: "OSGB 1936 / British National Grid", id: "EPSG:27700", track: 0.1, selected: true },
            ]}
          />
          <Row $h={206} $mt={6} $gap={6}>
            <Frame $row $w={1160} $h={206}>
              <InfoText>
                <InfoTitle>
                  <FormText $bold $size={37} $track={0.45}>OSGB 1936 / British National Grid</FormText>
                </InfoTitle>
                <InfoLine><FormText $bold $track={0.6}>Extent</FormText></InfoLine>
                <InfoLine $indent><FormText $track={0.2}>-9.20, 49.75, 2.88, 61.14</FormText></InfoLine>
                <InfoLine><FormText $bold $track={0.9}>Proj4</FormText></InfoLine>
                <InfoLine $indent><FormText $track={-0.03}>+proj=tmerc +lat_0=49 +lon_0=-2 +k=0.9996012717 +x_0=400000</FormText></InfoLine>
              </InfoText>
              <VScroll>
                <Track />
                <VThumb $len={42} />
              </VScroll>
            </Frame>
            <Map><ExtentMap /></Map>
          </Row>
        </Group>
        <Heading $h={64}>
          <FoldArrow width="12" height="8" viewBox="0 0 12 8"><path d="M0.500 0H11.500L6 7.500Z" fill="#333" /></FoldArrow>
          <FormText $bold $drop={16} $track={0.5}>Datum Transformations</FormText>
        </Heading>
        <Group $h={695}>
          <Row $h={42} $gap={17}>
            <CheckBox $disabled />
            <FormText $drop={4} $track={0.13} $color="#7b7b7b">Ask for datum transformation if several are available (defined in global setting)</FormText>
          </Row>
          <Row $h={55} $mt={20} $gap={18}>
            <Button $w={56} $h={55}><PlusIcon /></Button>
            <Button $w={56} $h={55}><MinusIcon /></Button>
            <Button $w={56} $h={55}><PencilIcon /></Button>
          </Row>
          <Frame $h={500} $mt={18}>
            <DatumHead>
              <DatumCells>
                {datumColumns.map((c) => (
                  <HeadCell key={c.label} $w={c.w} $pad={c.pad}>
                    <ListText $drop={3} $track={c.track}>{c.label}</ListText>
                  </HeadCell>
                ))}
              </DatumCells>
            </DatumHead>
          </Frame>
        </Group>
        <ButtonBar>
          <Button $w={80} $h={59} $primary><FormText $drop={3}>OK</FormText></Button>
          <Button $w={113} $h={59}><FormText $drop={3} $track={0.1}>Cancel</FormText></Button>
          <Button $w={97} $h={59}><FormText $drop={3}>Apply</FormText></Button>
          <Button $w={85} $h={59}><FormText $drop={3}>Help</FormText></Button>
        </ButtonBar>
      </Main>
    </DialogBody>
  </Dialog>
);

const StylingDock = () => (
  <Dock>
    <DockTitle $h={48}><ListText>Layer Styling</ListText><FloatMark /></DockTitle>
    <Combo $w={748} $h={56} $ml={15} $pad={5}>
      <PolygonIcon />
      <FormText $drop={4} $track={0.65}>London_Borough_Excluding_MHW</FormText>
      <Push $pr={15}><Arrow $dir="down" /></Push>
    </Combo>
    <Styling>
      <StyleTabs>
        <TabSlot $h={56}><BrushIcon /></TabSlot>
        <TabSlot $h={56}><LabelIcon /></TabSlot>
        <TabSlot $h={56}><CubeIcon /></TabSlot>
        <TabSlot $h={56}><BrushesIcon /></TabSlot>
        <TabSlot $h={56}><HistoryIcon /></TabSlot>
      </StyleTabs>
      <StylePane>
        <PaneTop>
          <PaneInner>
            <Combo $w={660} $h={56} $pad={10}>
              <SingleSymbolIcon />
              <Gap $w={6} />
              <FormText $drop={4} $track={0.1}>Single symbol</FormText>
            </Combo>
            <TreeRow>
              <Tree>
                <TreeItem $active $pad={18}>
                  <Arrow $dir="down" />
                  <Swatch $ml={21} $edge="#234a6e" $fill="#60a38d" />
                  <ListText $bold $drop={3}>Fill</ListText>
                </TreeItem>
                <TreeItem $pad={123}>
                  <Swatch $edge="#262626" $fill="#86b56f" />
                  <ListText $drop={3} $track={0.2}>Simple fill</ListText>
                </TreeItem>
              </Tree>
              <Preview />
            </TreeRow>
          </PaneInner>
          <VBar>
            <VEnd><Arrow $dir="up" /></VEnd>
            <Track $len={181} />
            <VThumb />
            <VEnd $last><Arrow $dir="down" /></VEnd>
          </VBar>
        </PaneTop>
        <HBar>
          <HEnd><Arrow $dir="left" /></HEnd>
          <Track />
          <HThumb $len={91} />
          <HEnd><Arrow $dir="right" /></HEnd>
          <Corner />
          <Gap $w={8} />
        </HBar>
        <StyleFoot>
          <Button $w={56} $h={55}><UndoIcon width={38} height={36} /></Button>
          <Gap $w={6} />
          <Button $w={56} $h={55}><RedoIcon width={38} height={36} /></Button>
          <LiveUpdate>
            <CheckBox><Tick /></CheckBox>
            <FormText $drop={4} $track={0.25}>Live update</FormText>
          </LiveUpdate>
          <Button $w={98} $h={59} $start><FormText $drop={3}>Apply</FormText></Button>
        </StyleFoot>
      </StylePane>
    </Styling>
    <Tabs>
      <Tab $w={258} $active><FormText $drop={6} $track={0.1}>Layer Styling</FormText></Tab>
      <Tab $w={340}><FormText $drop={4} $track={0.5}>Processing Toolbox</FormText></Tab>
      <TabLine />
    </Tabs>
    <Grip />
    <DockTitle $h={40}><ListText $track={0.05}>Search QMS</ListText><FloatMark /></DockTitle>
    <Field $w={760} $h={47} $ml={12} $pad={2}>
      <FormText $drop={3} $color="#7f7f7f" $track={0.3}>Search string...</FormText>
    </Field>
    <SearchTools>
      <Button $w={235} $h={59}><FormText $drop={3} $track={0.3}>Filter by extent</FormText></Button>
      <Gap $w={7} />
      <Combo $w={160} $h={46} $pad={3}>
        <FormText $drop={3}>All</FormText>
        <Push $pr={11}><Arrow $dir="down" /></Push>
      </Combo>
    </SearchTools>
    <Results />
    <News>
      <BellIcon />
      <FormText $drop={4} $track={0.45}><Link>Fresh geodata</Link> for your project</FormText>
    </News>
  </Dock>
);

const Status = () => (
  <StatusBar>
    <Field $w={252} $h={46} $pad={8}><FormText $drop={4} $color="#7f7f7f">K)</FormText></Field>
    <Gap $w={10} />
    <FormText $width={1368} $drop={4}>Ready</FormText>
    <FormText $width={155} $drop={4} $track={0.2}>Coordinate</FormText>
    <Field $w={230} $h={46} $pad={7}><FormText $drop={4} $track={0.4}>482001,205319</FormText></Field>
    <MouseIcon />
    <FormText $width={76} $drop={4}>Scale</FormText>
    <Field $w={204} $h={46} $pad={5}>
      <FormText $drop={4} $track={0.2}>1:512520</FormText>
      <ScaleDrop><Arrow $dir="down" /></ScaleDrop>
    </Field>
    <Lock />
    <FormText $width={133} $drop={4} $track={0.2}>Magnifier</FormText>
    <Spin $w={157} $pad={6}>
      <FormText $drop={4}>100%</FormText>
      <SpinArrows><Arrow $dir="up" /><Arrow $dir="down" /></SpinArrows>
    </Spin>
    <Gap $w={8} />
    <FormText $width={128} $drop={4} $track={0.3}>Rotation</FormText>
    <Spin $w={152} $pad={3}>
      <FormText $drop={2}>0.0 °</FormText>
      <SpinArrows><Arrow $dir="up" /><Arrow $dir="down" /></SpinArrows>
    </Spin>
    <Gap $w={7} />
    <CheckBox><Tick /></CheckBox>
    <Gap $w={16} />
    <FormText $width={120} $drop={4}>Render</FormText>
    <GlobeIcon />
    <Gap $w={2} />
    <FormText $width={235} $drop={4} $track={0.2}>EPSG:27700</FormText>
    <MessageIcon />
  </StatusBar>
);

export default function App() {
  return (
    <Screen>
      <GlobalStyle />
      <AppWindow>
        <ToolStrip $h={8} $faint />
        <ToolStrip $h={79} />
        <ToolStrip $h={79} />
        <StylingDock />
        <Status />
      </AppWindow>
      <PropertiesDialog />
    </Screen>
  );
}
